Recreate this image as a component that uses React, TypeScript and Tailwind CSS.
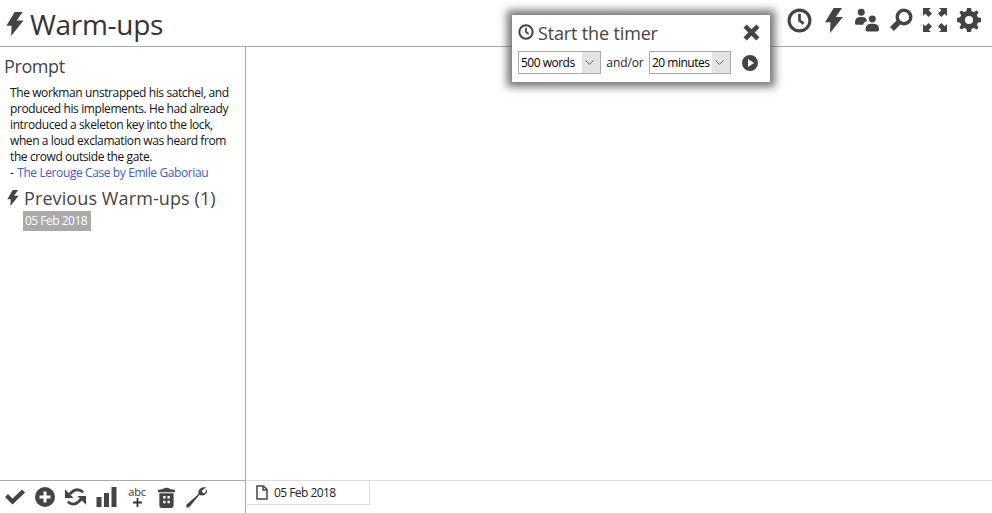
import { ChevronDown } from 'lucide-react';

const font = { fontFamily: '"Open Sans", sans-serif' };

function Bolt({ className }: { className: string }) {
  return (
    <svg viewBox="0 0 20 28" className={className} fill="currentColor">
      <path d="M9.6 0 L0 16 L6 16 L5.5 28 L20 10 L12 10 L19 0 Z" />
    </svg>
  );
}

function Clock({ className }: { className: string }) {
  return (
    <svg viewBox="0 0 24 24" className={className} fill="none" stroke="currentColor">
      <circle cx="12" cy="12" r="10" strokeWidth="3" />
      <path d="M12 5.5 V12 L16 15" strokeWidth="2.6" />
    </svg>
  );
}

function HeaderIcons() {
  return (
    <div className="flex items-center text-[#444]">
      <Clock className="w-[25px] h-[25px]" />
      <Bolt className="ml-[13px] w-[18px] h-[25px]" />
      <svg viewBox="0 0 26 24" className="ml-[12px] w-[25px] h-[24px]" fill="currentColor">
        <circle cx="6.5" cy="4" r="3.6" />
        <path d="M0 15 C0 10 3 9 6.5 9 C10 9 12 10 12.5 13 C10 14 9 15 8.5 17 H1.5 Q0 17 0 15 Z" />
        <circle cx="18" cy="11" r="3.6" />
        <path d="M11 22 C11 17 14 16 18 16 C22 16 25 17 25 22 Q25 24 23 24 H13 Q11 24 11 22 Z" />
      </svg>
      <svg viewBox="0 0 24 24" className="ml-[9px] w-[24px] h-[24px]" fill="none" stroke="currentColor">
        <circle cx="15" cy="9" r="6.8" strokeWidth="3.4" />
        <path d="M9.5 14.5 L3 21" strokeWidth="5.4" />
      </svg>
      <svg viewBox="0 0 24 24" className="ml-[10px] w-[24px] h-[24px]" fill="currentColor">
        <path d="M0 0 H8 L5.7 2.3 L9 5.6 L5.6 9 L2.3 5.7 L0 8 Z" />
        <path d="M24 0 V8 L21.7 5.7 L18.4 9 L15 5.6 L18.3 2.3 L16 0 Z" />
        <path d="M0 24 V16 L2.3 18.3 L5.6 15 L9 18.4 L5.7 21.7 L8 24 Z" />
        <path d="M24 24 H16 L18.3 21.7 L15 18.4 L18.4 15 L21.7 18.3 L24 16 Z" />
      </svg>
      <svg viewBox="0 0 24 24" className="ml-[10px] w-[24px] h-[24px]" fill="currentColor">
        <path
          fillRule="evenodd"
          d="M10 0 H14 L14.7 3.2 L16.9 4.1 L19.7 2.4 L21.6 4.3 L19.9 7.1 L20.8 9.3 L24 10 V14 L20.8 14.7 L19.9 16.9 L21.6 19.7 L19.7 21.6 L16.9 19.9 L14.7 20.8 L14 24 H10 L9.3 20.8 L7.1 19.9 L4.3 21.6 L2.4 19.7 L4.1 16.9 L3.2 14.7 L0 14 V10 L3.2 9.3 L4.1 7.1 L2.4 4.3 L4.3 2.4 L7.1 4.1 L9.3 3.2 Z M12 8 A4 4 0 1 0 12 16 A4 4 0 1 0 12 8 Z"
        />
      </svg>
    </div>
  );
}

function FakeSelect({ label, width, valueWidth }: { label: string; width: string; valueWidth: string }) {
  return (
    <div className={`${width} h-[23px] flex items-center justify-between bg-[#e3e3e3] border border-[#a9a9a9] pr-[3px]`}>
      <span className={`${valueWidth} h-full flex items-center bg-white pl-[2px] text-[12px] tracking-[-0.5px] whitespace-nowrap text-black leading-none`}>{label}</span>
      <ChevronDown className="w-[15px] h-[15px] text-[#555]" strokeWidth={1.4} />
    </div>
  );
}

function TimerPopup() {
  return (
    <div className="absolute left-[512px] top-[15px] w-[258px] h-[67px] bg-white pl-[6px] pr-[7px] pt-[5px] shadow-[0_0_8px_5px_rgba(85,85,85,0.8)]">
      <div className="flex items-center h-[24px] text-[#444]">
        <Clock className="w-[16px] h-[16px] mr-[4px]" />
        <span className="text-[18px] leading-none tracking-[-0.15px] mt-[1px]">Start the timer</span>
        <svg viewBox="0 0 16 16" className="ml-auto mr-[3px] w-[17px] h-[17px]" fill="currentColor">
          <path d="M3.5 0.5 L8 5 L12.5 0.5 L15.5 3.5 L11 8 L15.5 12.5 L12.5 15.5 L8 11 L3.5 15.5 L0.5 12.5 L5 8 L0.5 3.5 Z" />
        </svg>
      </div>
      <div className="flex items-center mt-[7px]">
        <FakeSelect label="500 words" width="w-[83px]" valueWidth="w-[63px]" />
        <span className="w-[48px] text-center text-[12px] tracking-[-0.1px] text-[#222]">and/or</span>
        <FakeSelect label="20 minutes" width="w-[82px]" valueWidth="w-[62px]" />
        <svg viewBox="0 0 16 16" className="ml-[11px] w-[16px] h-[16px] text-[#444]" fill="currentColor">
          <path fillRule="evenodd" d="M8 0 A8 8 0 1 0 8 16 A8 8 0 1 0 8 0 Z M6 4 L12 8 L6 12 Z" />
        </svg>
      </div>
    </div>
  );
}

function BottomTools() {
  return (
    <div className="h-[33px] border-t border-[#aaa] flex items-center pl-[5px] gap-[10px] text-[#444]">
      <svg viewBox="0 0 20 16" className="w-[20px] h-[16px]" fill="currentColor">
        <path d="M0 8 L3 5 L7.5 9.5 L17 0.5 L20 3.5 L7.5 15.5 Z" />
      </svg>
      <svg viewBox="0 0 20 20" className="w-[20px] h-[20px]" fill="currentColor">
        <path fillRule="evenodd" d="M10 0 A10 10 0 1 0 10 20 A10 10 0 1 0 10 0 Z M8.5 4.5 H11.5 V8.5 H15.5 V11.5 H11.5 V15.5 H8.5 V11.5 H4.5 V8.5 H8.5 Z" />
      </svg>
      <svg viewBox="0 0 22 20" className="w-[21px] h-[20px]" fill="none" stroke="currentColor" strokeWidth="3">
        <path d="M19 5 Q12 -1 5 7" />
        <path d="M3 15 Q10 21 17 12" />
        <path d="M0 2 V11 H9 Z M22 18 V9 H13 Z" fill="currentColor" stroke="none" />
      </svg>
      <svg viewBox="0 0 20 20" className="w-[21px] h-[20px]" fill="currentColor">
        <path d="M0 10 H5 V20 H0 Z M7.5 6 H12.5 V20 H7.5 Z M15 0 H20 V20 H15 Z" />
      </svg>
      <div className="w-[20px] flex flex-col items-center text-[11px] leading-[10px] tracking-[-0.2px] text-[#333]">
        <span>abc</span>
        <svg viewBox="0 0 10 10" className="w-[9px] h-[9px] mt-[1px]" fill="currentColor">
          <path d="M4 0 H6 V4 H10 V6 H6 V10 H4 V6 H0 V4 H4 Z" />
        </svg>
      </div>
      <svg viewBox="0 0 20 22" className="w-[19px] h-[21px]" fill="currentColor">
        <path
          fillRule="evenodd"
          d="M6 2 Q10 -0.5 14 2 L19 3 V5.5 H1 V3 Z M2.5 6.5 H17.5 V19 Q17.5 22 15 22 H5 Q2.5 22 2.5 19 Z M6.5 9.5 V12 H9 V9.5 Z M11 9.5 V12 H13.5 V9.5 Z M6.5 14.5 V17 H9 V14.5 Z M11 14.5 V17 H13.5 V14.5 Z"
        />
      </svg>
      <svg viewBox="0 0 22 22" className="w-[21px] h-[21px]" fill="currentColor">
        <path d="M14 8.5 L4 20.5 Q2 22.5 0.5 21 Q-0.5 19 1.5 17.5 L13 7.5 C12 3 16 -1 21 0.5 L16.5 4 L17.5 6 L19.5 6.5 L22 2 C23 7 19 10 14 8.5 Z" />
      </svg>
    </div>
  );
}

export default function App() {
  return (
    <div className="relative w-[992px] h-[513px] bg-white overflow-hidden flex flex-col" style={font}>
      <header className="h-[47px] shrink-0 border-b border-[#aaa] flex items-center justify-between pl-[6px] pr-[11px]">
        <div className="flex items-center gap-[6px] text-[#333] mt-[2px]">
          <Bolt className="w-[18px] h-[24px] text-[#444]" />
          <h1 className="text-[28px] leading-none tracking-[-0.3px]">Warm-ups</h1>
        </div>
        <div className="mb-[6px]">
          <HeaderIcons />
        </div>
      </header>

      <div className="flex-1 flex min-h-0">
        <aside className="w-[246px] shrink-0 border-r border-[#aaa] flex flex-col">
          <div className="flex-1 pl-[4px] pt-[6px]">
            <h2 className="text-[18px] leading-[26px] tracking-[-0.4px] text-[#444]">Prompt</h2>
            <div className="pl-[6px] pt-[6px] text-[12px] leading-[16px] tracking-[-0.4px] text-[#111]">
              <p className="w-[230px]">
                The workman unstrapped his satchel, and produced his implements. He had already introduced a skeleton key into the lock, when a loud exclamation was heard from the crowd outside the gate.
              </p>
              <p>
                - <span className="ml-[1px] text-[#3a62c4]">The Lerouge Case by Emile Gaboriau</span>
              </p>
            </div>
            <div className="flex items-center mt-[5px] pl-[3px] gap-[5px] text-[#444]">
              <Bolt className="w-[12px] h-[16px]" />
              <h2 className="text-[18px] leading-[24px] tracking-[0.1px]">Previous Warm-ups (1)</h2>
            </div>
            <div className="ml-[19px] mt-[1px] w-[68px] h-[20px] bg-[#aaa] text-white text-[12px] leading-[20px] tracking-[-0.5px] pl-[2px] whitespace-nowrap">05 Feb 2018</div>
          </div>
          <BottomTools />
        </aside>

        <main className="flex-1 flex flex-col">
          <div className="flex-1" />
          <div className="h-[33px] border-t border-[#ddd]">
            <div className="w-[123px] h-[24px] ml-[1px] border-r border-b border-[#ddd] flex items-center pl-[9px] gap-[6px] text-[12px] tracking-[-0.55px] text-[#222]">
              <svg viewBox="0 0 12 15" className="w-[12px] h-[15px] text-[#444]" fill="none" stroke="currentColor" strokeWidth="1.5">
                <path d="M1 1 H7.5 L11 4.5 V14 H1 Z" />
                <path d="M7 1 V5 H11" />
              </svg>
              <span>05 Feb 2018</span>
            </div>
          </div>
        </main>
      </div>

      <TimerPopup />
    </div>
  );
}
